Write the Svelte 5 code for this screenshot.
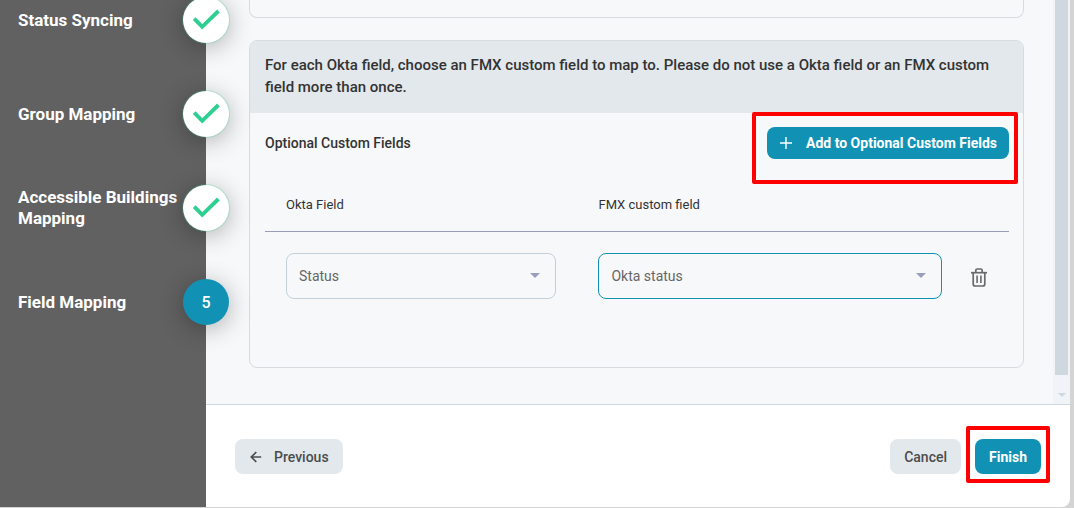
<script>
  const steps = [
    { label: 'Status Syncing', done: true },
    { label: 'Group Mapping', done: true },
    { label: 'Accessible Buildings Mapping', done: true },
    { label: 'Field Mapping', done: false, number: 5 }
  ];
  let oktaField = $state('Status');
  let customField = $state('Okta status');
</script>

<div class="dialog">
  <nav class="sidebar" aria-label="Setup steps">
    <ol>
      {#each steps as step}
        <li aria-current={step.done ? undefined : 'step'}>
          <span class="label">{step.label}</span>
          <span class="circle" class:current={!step.done}>
            {#if step.done}
              <svg width="46" height="46" viewBox="0 0 46 46" aria-hidden="true">
                <path d="M11.2 21.7 L19.2 29.8 L35.4 14" fill="none" stroke="#2fcf92" stroke-width="3.9" />
              </svg>
            {:else}
              {step.number}
            {/if}
          </span>
        </li>
      {/each}
    </ol>
  </nav>

  <main>
    <div class="scroller">
      <div class="content">
        <div class="card previous-card"></div>
        <section class="card">
          <p class="intro">
            For each Okta field, choose an FMX custom field to map to. Please do not use a Okta field or an FMX custom field more than once.
          </p>
          <div class="body">
            <div class="heading">
              <h2>Optional Custom Fields</h2>
              <div class="marked marked-add">
                <button class="primary add" type="button">
                  <svg width="12" height="12" viewBox="0 0 12 12" aria-hidden="true">
                    <path d="M6 0 V12 M0 6 H12" stroke="#fff" stroke-width="1.4" />
                  </svg>
                  Add to Optional Custom Fields
                </button>
              </div>
            </div>
            <table>
              <colgroup><col class="col-okta" /><col /><col class="col-action" /></colgroup>
              <thead>
                <tr>
                  <th scope="col" id="okta-field">Okta Field</th>
                  <th scope="col" id="fmx-field">FMX custom field</th>
                  <td></td>
                </tr>
              </thead>
              <tbody>
                <tr>
                  <td>
                    <div class="picker">
                      <select aria-labelledby="okta-field" bind:value={oktaField}>
                        <option>Status</option>
                      </select>
                      <svg width="10" height="5" viewBox="0 0 10 5" aria-hidden="true"><path d="M0 0 H10 L5 5 Z" fill="#9a9dbb" /></svg>
                    </div>
                  </td>
                  <td>
                    <div class="picker active">
                      <select aria-labelledby="fmx-field" bind:value={customField}>
                        <option>Okta status</option>
                      </select>
                      <svg width="10" height="5" viewBox="0 0 10 5" aria-hidden="true"><path d="M0 0 H10 L5 5 Z" fill="#9a9dbb" /></svg>
                    </div>
                  </td>
                  <td class="action">
                    <button class="trash" type="button" aria-label="Delete mapping">
                      <svg width="16" height="19" viewBox="0 0 16 19" fill="none" stroke="#6a6a6a" aria-hidden="true">
                        <path d="M0 4.7 H16" stroke-width="1.7" />
                        <path d="M4.8 4.5 V2.6 Q4.8 1 6.4 1 H9.6 Q11.2 1 11.2 2.6 V4.5" stroke-width="1.7" />
                        <path d="M2.2 5 V16 Q2.2 18 4.2 18 H11.8 Q13.8 18 13.8 16 V5" stroke-width="1.7" />
                        <path d="M6.1 7.6 V15 M9.9 7.6 V15" stroke-width="1.6" />
                      </svg>
                    </button>
                  </td>
                </tr>
              </tbody>
            </table>
          </div>
        </section>
      </div>
      <div class="scrollbar" aria-hidden="true">
        <div class="thumb"></div>
        <div class="down">
          <svg width="8" height="4" viewBox="0 0 8 4"><path d="M0 0 H8 L4 4 Z" fill="#cfd7df" /></svg>
        </div>
      </div>
    </div>

    <footer>
      <button class="secondary previous" type="button">
        <svg width="12" height="12" viewBox="0 0 12 12" fill="none" stroke="#4c4c4c" stroke-width="1.7" aria-hidden="true">
          <path d="M11.2 6 H1.5 M6.3 1 L1.3 6 L6.3 11" />
        </svg>
        Previous
      </button>
      <div class="end">
        <button class="secondary" type="button">Cancel</button>
        <div class="marked marked-finish">
          <button class="primary finish" type="button">Finish</button>
        </div>
      </div>
    </footer>
  </main>
</div>

<style>
  :global(body) {
    background: #d4d4d4;
    font-family: Roboto, 'Liberation Sans', sans-serif;
    color: #333;
  }
  .dialog, .dialog * {
    box-sizing: border-box;
  }
  .dialog {
    display: flex;
    min-height: calc(100vh - 1px);
    margin: 0 4px 1px 0;
    overflow: hidden;
    background: #fff;
    border-radius: 0 0 8px 0;
  }
  .sidebar {
    position: relative;
    z-index: 1;
    flex: none;
    width: 206px;
    background: #616161;
  }
  ol {
    display: flex;
    flex-direction: column;
    gap: 48px;
    margin: -3px -23px 0 0;
    padding: 0 0 0 18px;
    list-style: none;
  }
  li {
    display: flex;
    align-items: center;
    justify-content: space-between;
    height: 46px;
  }
  .label {
    width: 165px;
    color: #fff;
    font-size: 17px;
    font-weight: 700;
    line-height: 21px;
  }
  .circle {
    display: flex;
    flex: none;
    align-items: center;
    justify-content: center;
    width: 46px;
    height: 46px;
    border-radius: 50%;
    background: #fff;
    box-shadow: 0 0 0 1px #2fcf9240, 0 4px 24px #0000004d;
  }
  .circle.current {
    background: #1192b5;
    color: #fff;
    font-size: 16px;
    font-weight: 500;
    box-shadow: 0 4px 24px #0000004d;
  }
  main {
    display: flex;
    flex: 1;
    flex-direction: column;
    min-width: 0;
  }
  .scroller {
    display: flex;
    flex: 1;
    background: #f7f8fa;
    border-bottom: 1px solid #cfd8df;
  }
  .content {
    flex: 1;
    padding: 0 29px 36px 43px;
  }
  .card {
    border: 1px solid #d8dce0;
    border-radius: 8px;
  }
  .previous-card {
    height: 18px;
    margin-bottom: 22px;
    border-top: 0;
    border-radius: 0 0 8px 8px;
  }
  .intro {
    margin: 0;
    padding: 13px 28px 15px 15px;
    border-radius: 7px 7px 0 0;
    background: #e2e8ec;
    font-size: 15px;
    font-weight: 500;
    line-height: 22px;
  }
  .body {
    padding: 14px 14px 68px 15px;
  }
  .heading {
    display: flex;
    align-items: center;
    justify-content: space-between;
  }
  h2 {
    margin: 0;
    font-size: 14px;
    font-weight: 500;
    line-height: 20px;
  }
  button {
    display: flex;
    align-items: center;
    justify-content: center;
    height: 35px;
    padding: 0 14px;
    border: 0;
    border-radius: 8px;
    font: 500 14px/20px Roboto, 'Liberation Sans', sans-serif;
    cursor: pointer;
  }
  .primary {
    background: #1192b5;
    color: #fff;
    font-weight: 700;
  }
  .secondary {
    background: #e2e8ec;
    color: #4c4c4c;
  }
  .add {
    gap: 14px;
    height: 32px;
    padding: 0 12px 0 13px;
  }
  .marked {
    position: relative;
  }
  .marked::after {
    content: '';
    position: absolute;
    border: 4px solid #fe0000;
    border-radius: 2px;
    pointer-events: none;
  }
  .marked-add::after {
    inset: -15px -9px -25px -15px;
  }
  .marked-finish::after {
    inset: -13px -9px -9px -9px;
  }
  table {
    width: 100%;
    margin-top: 20px;
    border-collapse: collapse;
    table-layout: fixed;
  }
  .col-okta {
    width: 42%;
  }
  .col-action {
    width: 46px;
  }
  th, thead td {
    height: 52px;
    padding: 0 21px;
    border-bottom: 1px solid #9a9dbb;
    font-size: 13px;
    font-weight: 400;
    text-align: left;
  }
  tbody td {
    padding: 21px 21px 0;
  }
  tbody td.action {
    padding: 25px 0 0;
  }
  .picker {
    display: grid;
    align-items: center;
  }
  .picker > * {
    grid-area: 1 / 1;
  }
  .picker svg {
    justify-self: end;
    margin-right: 16px;
    pointer-events: none;
  }
  select {
    appearance: none;
    width: 100%;
    height: 46px;
    padding: 0 32px 0 12px;
    border: 1px solid #c4d0d9;
    border-radius: 8px;
    background: transparent;
    color: #666;
    font: 400 14px/20px Roboto, 'Liberation Sans', sans-serif;
  }
  .active select {
    border-color: #1192b5;
  }
  .trash {
    width: 32px;
    padding: 0;
    background: transparent;
  }
  .scrollbar {
    display: flex;
    flex: none;
    flex-direction: column;
    width: 17px;
    padding: 0 2px;
    background: #f0f3f7;
  }
  .thumb {
    flex: 1;
    background: #cfd7df;
  }
  .down {
    display: flex;
    align-items: center;
    justify-content: center;
    height: 29px;
    padding-top: 10px;
  }
  footer {
    display: flex;
    align-items: center;
    justify-content: space-between;
    padding: 34px 29px 33px;
  }
  .previous {
    gap: 12px;
    padding: 0 14px 0 15px;
  }
  .end {
    display: flex;
    gap: 14px;
  }
</style>
